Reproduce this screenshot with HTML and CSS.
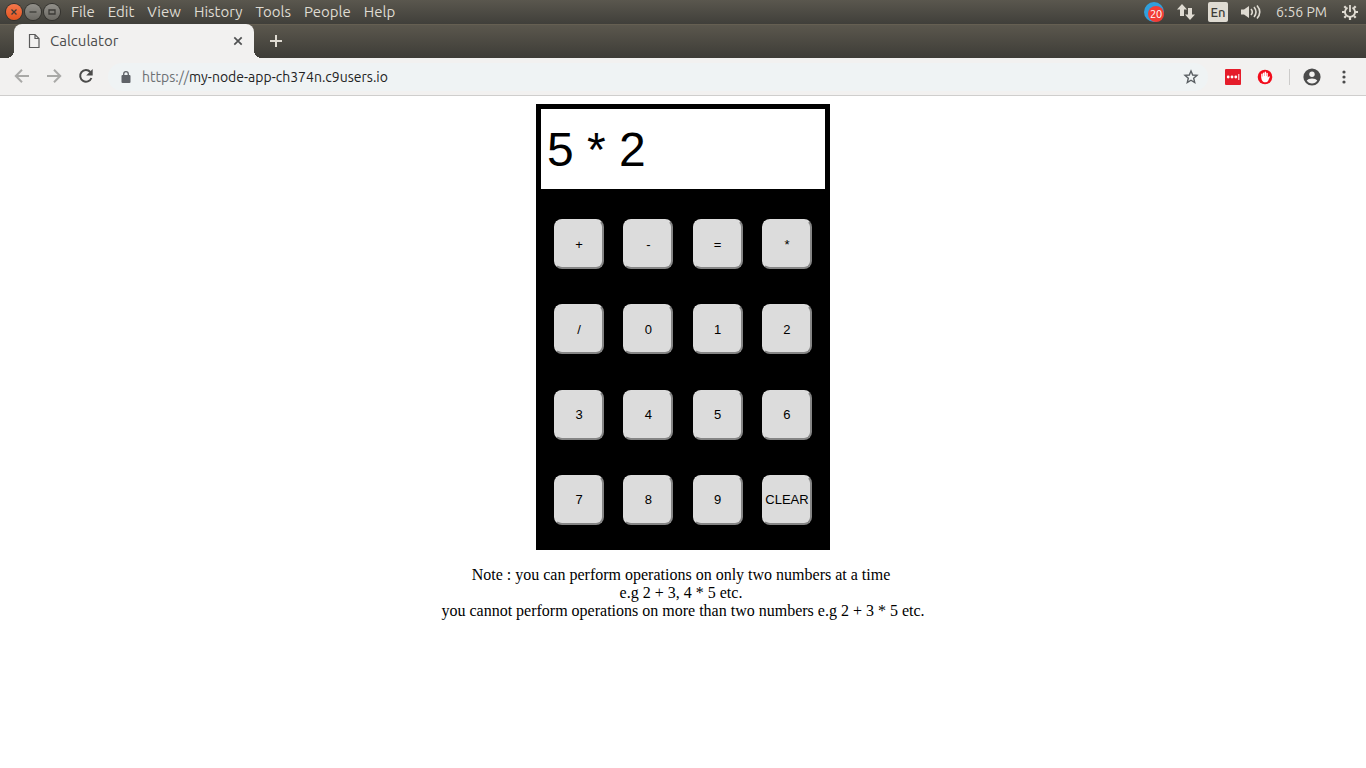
FILE: index.html
```html
<!DOCTYPE html>
<html lang="en">
<head>
<meta charset="utf-8">
<title>Calculator</title>
<link rel="stylesheet" href="styles.css">
</head>
<body>
<header class="menubar">
  <div class="window-buttons">
    <button class="dot dot-close" aria-label="Close window"><svg width="16" height="16" viewBox="0 0 16 16"><path d="M5.5 5.5l5 5m0-5l-5 5"/></svg></button>
    <button class="dot" aria-label="Minimize"><svg width="16" height="16" viewBox="0 0 16 16"><path d="M4.5 8h7"/></svg></button>
    <button class="dot" aria-label="Maximize"><svg width="16" height="16" viewBox="0 0 16 16"><path d="M5 6h6v4H5z"/></svg></button>
  </div>
  <nav class="menus">
    <button>File</button><button>Edit</button><button>View</button><button>History</button><button>Tools</button><button>People</button><button>Help</button>
  </nav>
  <div class="tray">
    <span class="updates"><span class="count">20</span></span>
    <svg width="18" height="18" viewBox="0 0 18 18" fill="#dfdbd2"><path d="M5 1l5 5.500H7V13H3V6.500H0zM13 17l5-5.500h-3V5h-4v6.500H8z"/></svg>
    <span class="lang">En</span>
    <svg class="volume" width="21" height="16" viewBox="0 0 21 16" fill="none" stroke="#dfdbd2" stroke-width="1.600"><path fill="#dfdbd2" stroke="none" d="M0 5.500h3L8 2v12l-5-3.500H0z"/><path d="M10 5q2.600 3 0 6"/><path d="M13 3q4 5 0 10"/><path d="M16 1.500q5.500 6.500 0 13"/></svg>
    <span class="clock">6:56 PM</span>
    <svg width="18" height="18" viewBox="0 0 18 18" fill="none" stroke="#dfdbd2"><path stroke-width="1.800" d="M6.500 4.600a5 5 0 1 0 5 0"/><path stroke-width="1.800" d="M9 2v7"/><path stroke-width="2.200" d="M1 9h3m10 0h3M3.300 3.300l1.700 1.700m9.700-1.700L13 5M3.300 14.700L5 13m9.700 1.700L13 13M9 14v3"/></svg>
  </div>
</header>
<div class="tabstrip">
  <div class="tab">
    <svg width="12" height="16" viewBox="0 0 12 16" fill="none" stroke="#5a5a5a" stroke-width="1.200"><path d="M1.500 1.500h5.500l4 4v9H1.500zM7 1.500v4h4"/></svg>
    <span class="tab-title">Calculator</span>
    <button class="tab-close" aria-label="Close tab"><svg width="10" height="10" viewBox="0 0 10 10" stroke="#505152" stroke-width="1.700"><path d="M1.300 1.300l7.400 7.400m0-7.400L1.300 8.700"/></svg></button>
  </div>
  <button class="tab-new" aria-label="New tab"><svg width="12" height="12" viewBox="0 0 12 12" stroke="#dfdbd2" stroke-width="2"><path d="M6 0v12M0 6h12"/></svg></button>
</div>
<div class="toolbar">
  <div class="navigation">
    <button aria-label="Back"><svg width="16" height="16" viewBox="0 0 16 16" fill="none" stroke="#a9a9a7" stroke-width="2"><path d="M15 7H2M8 .8L1.800 7 8 13.200"/></svg></button>
    <button aria-label="Forward"><svg width="16" height="16" viewBox="0 0 16 16" fill="none" stroke="#a9a9a7" stroke-width="2"><path d="M1 7h13M8 .8L14.200 7 8 13.200"/></svg></button>
    <button aria-label="Reload"><svg width="16" height="16" viewBox="0 0 16 16" fill="none" stroke="#4b4b4a" stroke-width="2"><path d="M12.300 3A5.800 5.800 0 1 0 13.400 9"/><path fill="#4b4b4a" stroke="none" d="M14.700 0v6.500H8.200z"/></svg></button>
  </div>
  <div class="omnibox">
    <svg width="10" height="12" viewBox="0 0 10 12"><path fill="#5f6368" d="M1.500 4h7q1 0 1 1v6q0 1-1 1h-7q-1 0-1-1V5q0-1 1-1z"/><path fill="none" stroke="#5f6368" stroke-width="1.300" d="M2.700 4.500V3a2.300 2.300 0 0 1 4.600 0v1.500"/></svg>
    <a class="url" href="#"><span class="scheme">https://</span>my-node-app-ch374n.c9users.io</a>
    <button aria-label="Bookmark"><svg width="16" height="16" viewBox="0 0 16 16" fill="none" stroke="#5a5f63" stroke-width="1.400"><path d="M8 2l1.700 4 4.300.4-3.300 2.800 1 4.300L8 11.200l-3.700 2.300 1-4.300L2 6.400 6.300 6z"/></svg></button>
  </div>
  <div class="extensions">
    <button aria-label="LastPass"><svg width="16" height="16" viewBox="0 0 16 16"><rect width="16" height="16" rx="1" fill="#e51c2a"/><g fill="#fff"><circle cx="3.200" cy="8" r="1.400"/><circle cx="7" cy="8" r="1.400"/><circle cx="10.800" cy="8" r="1.400"/><path d="M13.300 5h1v6h-1z"/></g></svg></button>
    <button aria-label="AdBlock"><svg width="16" height="16" viewBox="0 0 16 16"><circle cx="8" cy="8" r="7.300" fill="#f20d1c"/><path fill="#fff" d="M4.200 8.500V5q.7-.8 1.300 0v2.500h.3V4q.8-.9 1.500 0v3h.3V3q.8-.8 1.500 0v4h.3V4q.8-.7 1.400.2V8.500l1.200-1.300q1-.1.800.8l-1.600 3.800q-.6 1.400-2 1.400H7.200q-2.400-.3-3-4.700z"/></svg></button>
    <span class="divider"></span>
    <button aria-label="Profile"><svg width="18" height="18" viewBox="0 0 18 18"><circle cx="9" cy="9" r="8.600" fill="#4b4b4b"/><circle cx="9" cy="6.300" r="2.700" fill="#f2f1f0"/><path fill="#f2f1f0" d="M3.700 12.500q1.500-2 5.300-2t5.300 2Q12.500 15.500 9 15.500t-5.300-3z"/></svg></button>
    <button class="more" aria-label="Menu"><svg width="4" height="14" viewBox="0 0 4 14" fill="#4b4b4b"><circle cx="2" cy="2" r="1.600"/><circle cx="2" cy="7" r="1.600"/><circle cx="2" cy="12" r="1.600"/></svg></button>
  </div>
</div>
<main class="page">
  <div class="calculator">
    <input class="display" type="text" value="5 * 2" aria-label="Expression">
    <div class="keys">
      <button>+</button><button>-</button><button>=</button><button>*</button>
      <button>/</button><button>0</button><button>1</button><button>2</button>
      <button>3</button><button>4</button><button>5</button><button>6</button>
      <button>7</button><button>8</button><button>9</button><button>CLEAR</button>
    </div>
  </div>
  <p class="note">Note : you can perform operations on only two numbers at a time&nbsp;<br>e.g 2 + 3, 4 * 5 etc.&nbsp;<br>you cannot perform operations on more than two numbers e.g 2 + 3 * 5 etc.</p>
</main>
</body>
</html>
```
FILE: styles.css
```css
* { box-sizing: border-box; }
body {
  margin: 0;
  background: #fff;
  color: #000;
  font-family: Ubuntu, "Noto Sans", sans-serif;
}
button {
  margin: 0;
  padding: 0;
  border: 0;
  background: none;
  color: inherit;
  font: inherit;
}
svg { display: block; flex: none; }

.menubar {
  display: flex;
  align-items: center;
  height: 24px;
  padding: 0 7px 0 6px;
  background: linear-gradient(#5a574e, #403f3a);
  color: #dfdbd2;
  font-size: 15px;
  line-height: 20px;
}
.window-buttons { display: flex; gap: 3px; }
.dot {
  width: 16px;
  height: 16px;
  border-radius: 50%;
  background: linear-gradient(#92908a, #6b6963);
  box-shadow: 0 0 0 1px #33322e;
}
.dot-close { background: linear-gradient(#f4774b, #e35420); }
.dot path { fill: none; stroke: #3c3b37; stroke-width: 1.3; }
.menus { display: flex; gap: 13px; margin-left: 11px; }
.tray { display: flex; align-items: center; margin-left: auto; gap: 13px; }
.updates {
  display: flex;
  align-items: flex-end;
  justify-content: flex-end;
  width: 20px;
  height: 20px;
  border-radius: 50%;
  background: #309fdc;
}
.count {
  width: 16px;
  height: 16px;
  border-radius: 50%;
  background: #f33c35;
  color: #fff;
  font-size: 11px;
  line-height: 16px;
  text-align: center;
}
.lang {
  width: 20px;
  height: 20px;
  border-radius: 2px;
  background: #dfdbd2;
  color: #3c3b37;
  font-size: 13px;
  font-weight: 500;
  line-height: 20px;
  text-align: center;
}
.clock { padding: 0 1px; font-size: 14px; }

.tabstrip {
  display: flex;
  align-items: center;
  height: 34px;
  padding-left: 14px;
  background: linear-gradient(#5c584e, #3d3c37);
  box-shadow: inset 0 1px #655f52;
}
.tab {
  position: relative;
  display: flex;
  align-items: center;
  align-self: stretch;
  width: 240px;
  padding: 0 11px 0 14px;
  border-radius: 8px 8px 0 0;
  background: #f2f1f0;
  color: #4c4c4c;
  font-size: 15px;
  line-height: 20px;
}
.tab::before,
.tab::after {
  content: "";
  position: absolute;
  bottom: 0;
  width: 8px;
  height: 8px;
}
.tab::before {
  right: 100%;
  background: radial-gradient(circle at 0 0, transparent 8px, #f2f1f0 8px);
}
.tab::after {
  left: 100%;
  background: radial-gradient(circle at 100% 0, transparent 8px, #f2f1f0 8px);
}
.tab-title { flex: 1; margin-left: 10px; }
.tab-new { margin-left: 16px; }

.toolbar {
  display: flex;
  align-items: center;
  height: 38px;
  padding: 0 20px 0 14px;
  background: #f2f1f0;
  border-bottom: 1px solid #cfcecd;
}
.navigation { display: flex; gap: 16px; }
.omnibox {
  display: flex;
  align-items: center;
  flex: 1;
  height: 28px;
  margin: 0 17px 0 14px;
  padding: 0 9px 0 13px;
  border-radius: 14px;
  background: #eff3f4;
}
.url {
  flex: 1;
  margin-left: 11px;
  color: #222;
  font-size: 14px;
  line-height: 20px;
  text-decoration: none;
}
.scheme { color: #6c7073; }
.extensions { display: flex; align-items: center; gap: 16px; }
.divider { width: 1px; height: 16px; background: #cccbca; }
.extensions .divider { margin-right: -3px; }
.more { padding-left: 5px; }

.page { padding: 8px; }
.calculator {
  width: 294px;
  margin: 0 auto;
  border: 5px solid #000;
  background: #000;
}
.display {
  display: block;
  width: 100%;
  height: 80px;
  padding: 0 6px;
  border: 0;
  border-radius: 0;
  background: #fff;
  color: #000;
  font-family: "Liberation Sans", Arial, sans-serif;
  font-size: 48px;
  outline: 0;
}
.keys {
  display: grid;
  grid-template-columns: repeat(4, 50px);
  grid-auto-rows: 50px;
  justify-content: space-between;
  align-content: space-between;
  min-height: 356px;
  padding: 30px 13px 20px;
}
.keys button {
  display: flex;
  align-items: center;
  justify-content: center;
  border: 2px solid;
  border-color: #dcdcdc #858585 #858585 #dcdcdc;
  border-radius: 8px;
  background: #dcdcdc;
  font-family: "Liberation Sans", Arial, sans-serif;
  font-size: 13px;
}
.note {
  margin: 16px 0 0;
  font-family: "Liberation Serif", "Times New Roman", serif;
  font-size: 16px;
  line-height: 18px;
  text-align: center;
}
```
